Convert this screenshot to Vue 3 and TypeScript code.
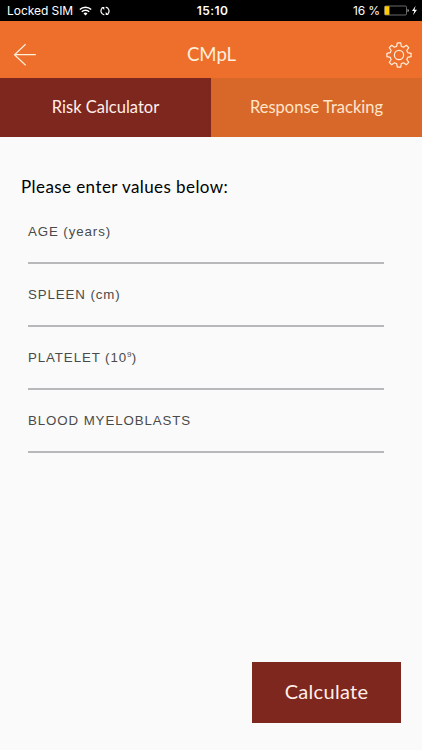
<script setup lang="ts">
import { ref } from 'vue'

interface Field {
  label: string
  sup?: string
  tail?: string
}

const fields: Field[] = [
  { label: 'AGE (years)' },
  { label: 'SPLEEN (cm)' },
  { label: 'PLATELET (10', sup: '9', tail: ')' },
  { label: 'BLOOD MYELOBLASTS' },
]

const tab = ref<'risk' | 'response'>('risk')

// Outline of an eight-toothed gear centred on the origin.
function gearPath(outer: number, root: number): string {
  const point = (r: number, deg: number): string => {
    const a = (deg * Math.PI) / 180
    return `${(r * Math.sin(a)).toFixed(2)} ${(-r * Math.cos(a)).toFixed(2)}`
  }
  let d = `M${point(root, -15)}`
  for (let i = 0; i < 8; i++) {
    const c = i * 45
    d += ` L${point(outer, c - 8)} L${point(outer, c + 8)} L${point(root, c + 15)}`
    d += ` A${root} ${root} 0 0 1 ${point(root, c + 30)}`
  }
  return d + 'Z'
}
const gear = gearPath(12.2, 9)
</script>

<template>
  <div class="screen">
    <div class="status">
      <div class="status-left">
        <span class="carrier">Locked SIM</span>
        <svg class="wifi" width="13" height="10" viewBox="0 0 13 10">
          <path d="M.8 3.5a8.2 8.2 0 0 1 11.4 0M2.8 5.7a5.3 5.3 0 0 1 7.4 0" fill="none" stroke="#fff" stroke-width="1.5" />
          <path d="M6.5 9.5 4.500 7.400a2.900 2.900 0 0 1 4 0z" fill="#fff" />
        </svg>
        <svg class="sync" width="10" height="10" viewBox="0 0 10 10">
          <path d="M4.300 8.900A4 4 0 0 1 2.300 2M5.700 1.100A4 4 0 0 1 7.700 8" fill="none" stroke="#fff" stroke-width="1.200" />
          <path d="M1.300.9h3v3zM8.700 9.100h-3v-3z" fill="#fff" />
        </svg>
      </div>
      <span class="clock">15:10</span>
      <div class="status-right">
        <span class="percent">16 %</span>
        <svg width="34" height="11" viewBox="0 0 34 11">
          <rect x=".5" y="1" width="22" height="9" rx="1.2" fill="none" stroke="#999" stroke-width=".7" />
          <rect x=".8" y="1.200" width="4.600" height="8.600" fill="#fc0" />
          <path d="M23.500 4v3q1.400-.4 1.400-1.500T23.500 4" fill="#aaa" />
          <path d="M31.600.8 28 6h2.300L29 10.200 33 4.800h-2.500z" fill="#fff" />
        </svg>
      </div>
    </div>

    <header class="bar">
      <button class="icon" aria-label="Back">
        <svg width="24" height="24" viewBox="0 0 24 24">
          <path d="M12.600 1.200 1.500 11.700 12.600 22.200M1.500 11.700h21.300" fill="none" stroke="#fff0dc" stroke-width="1.200" />
        </svg>
      </button>
      <h1>CMpL</h1>
      <button class="icon" aria-label="Settings">
        <svg width="26" height="26" viewBox="-13 -13 26 26">
          <g fill="none" stroke="#fff0dc" stroke-width="1.200" stroke-linejoin="round">
            <path :d="gear" />
            <circle r="4.600" />
          </g>
        </svg>
      </button>
    </header>

    <nav class="tabs">
      <button :class="{ active: tab === 'risk' }" @click="tab = 'risk'">Risk Calculator</button>
      <button :class="{ active: tab === 'response' }" @click="tab = 'response'">Response Tracking</button>
    </nav>

    <main class="content">
      <h2>Please enter values below:</h2>
      <div class="fields">
        <div v-for="f in fields" :key="f.label" class="field">
          <span>{{ f.label }}<sup v-if="f.sup">{{ f.sup }}</sup>{{ f.tail }}</span>
        </div>
      </div>
      <button class="calculate">Calculate</button>
    </main>
  </div>
</template>

<style>
body {
  background: #fafafa;
}
</style>

<style scoped>
.screen {
  width: 422px;
  height: 750px;
  display: flex;
  flex-direction: column;
  overflow: hidden;
  background: #fafafa;
  font-family: Lato, "Liberation Sans", sans-serif;
}
button {
  border: 0;
  padding: 0;
  margin: 0;
  background: none;
  font: inherit;
  cursor: pointer;
}
svg {
  display: block;
}
.status {
  flex: none;
  height: 21px;
  display: grid;
  grid-template-columns: 1fr auto 1fr;
  align-items: center;
  background: #000;
  color: #fff;
  font: 12px/21px Inter, sans-serif;
  padding: 0 4px 0 7px;
}
.status-left,
.status-right {
  display: flex;
  align-items: center;
}
.status-right {
  justify-content: flex-end;
  gap: 4px;
}
.carrier {
  letter-spacing: -0.05px;
}
.percent {
  letter-spacing: -0.15px;
}
.wifi {
  margin-left: 6px;
}
.sync {
  margin-left: 8px;
}
.clock {
  font-weight: 600;
  letter-spacing: 0.4px;
}
.bar {
  flex: none;
  height: 57px;
  box-sizing: border-box;
  display: flex;
  align-items: center;
  justify-content: space-between;
  padding: 0 10px 0 13px;
  background: #ee6e2b;
}
.icon {
  padding-top: 10px;
}
h1 {
  margin: 9px 0 0;
  font-size: 18.6px;
  line-height: 24px;
  font-weight: 400;
  color: #fff0dc;
}
.tabs {
  flex: none;
  height: 59px;
  display: grid;
  grid-template-columns: 1fr 1fr;
}
.tabs button {
  padding-bottom: 2px;
  background: #d86829;
  color: #ffe5ca;
  font-size: 16.5px;
  line-height: 24px;
}
.tabs button.active {
  background: #7e271f;
  color: #ffefe8;
}
.content {
  flex: 1;
  display: flex;
  flex-direction: column;
  padding: 38px 21px 27px;
}
h2 {
  margin: 0;
  font-size: 17px;
  line-height: 24px;
  font-weight: 400;
  letter-spacing: 0.42px;
  color: #000;
}
.fields {
  padding: 2px 17px 0 7px;
}
.field {
  height: 63px;
  box-sizing: border-box;
  padding-top: 22px;
  border-bottom: 2px solid #b8b8ba;
  font: 13.3px/18px "Liberation Sans", Arial, sans-serif;
  letter-spacing: 0.9px;
  color: #4a4a4a;
}
sup {
  font-size: 8px;
  line-height: 0;
  vertical-align: 5px;
  letter-spacing: 0.3px;
}
.calculate {
  width: 149px;
  height: 61px;
  padding-bottom: 3px;
  margin-top: auto;
  align-self: flex-end;
  background: #7e271f;
  color: #ffefe8;
  font-size: 20px;
  letter-spacing: 0.3px;
}
</style>
